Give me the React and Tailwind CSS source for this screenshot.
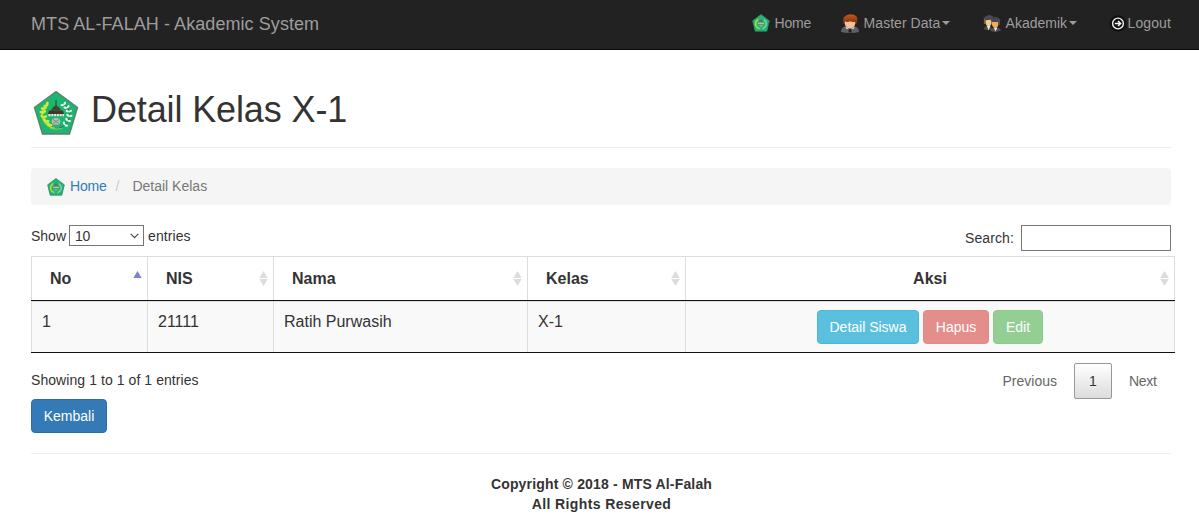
import React from 'react';

function Emblem({ className }) {
  const leaves = [
    [14, 15.5, -45], [11.5, 19, -25], [10, 23, -10], [10.5, 27.5, 8], [12.5, 31.5, 25], [15.5, 35, 40],
  ];
  const petals = [
    [31, 15, -35], [34, 18, -20], [35.8, 22, 0], [36, 26.500, 15], [34.500, 31, 30], [31.500, 35, 45],
  ];
  return (
    <svg viewBox="0 0 46 46" className={className} aria-hidden="true">
      <path d="M23 1.5 44.5 17.5 36.5 44H9.5L1.5 17.500Z" fill="#1db670" stroke="#5f7f6b" strokeWidth="1.4" />
      <path d="M15 14Q7 20 10 29Q13 37 22 38.500" fill="none" stroke="#b8dc35" strokeWidth="1.4" />
      {leaves.map(([x, y, r]) => (
        <g key={y} transform={`rotate(${r} ${x} ${y})`} fill="#cfe83c">
          <ellipse cx={x - 1.6} cy={y} rx="2.2" ry="1.4" transform={`rotate(35 ${x} ${y})`} />
          <ellipse cx={x + 1.8} cy={y} rx="2.2" ry="1.4" transform={`rotate(-35 ${x} ${y})`} />
        </g>
      ))}
      <path d="M31 14Q39 20 36.500 28Q34 36 26 38" fill="none" stroke="#2b7f55" strokeWidth="1" />
      {petals.map(([x, y, r]) => (
        <g key={y} transform={`rotate(${r} ${x} ${y})`} fill="#f3f6f0">
          <ellipse cx={x - 1.8} cy={y} rx="1.8" ry="1.1" transform={`rotate(30 ${x} ${y})`} />
          <ellipse cx={x + 1.8} cy={y} rx="1.8" ry="1.1" transform={`rotate(-30 ${x} ${y})`} />
        </g>
      ))}
      <path d="M23 10V16" stroke="#3c3a2c" strokeWidth="1" />
      <path d="M18 20.500Q19 17.500 23 15Q27 17.500 28 20.500Z" fill="#3b4a35" />
      <path d="M16 20.500H30L31 24H15Z" fill="#4a3429" />
      <path d="M15.500 25.200H31" stroke="#e7e9df" strokeWidth="2.200" strokeDasharray="2 .8" />
      <ellipse cx="23" cy="31.500" rx="4.300" ry="3.500" fill="#b4bfb6" />
      <path d="M20 29.500L26 33.500M26 29.500L20 33.500M20 37L23 34.500L26 37" fill="none" stroke="#7c8b80" strokeWidth="1" />
      <path d="M17 38.500Q23 40 29 38.500" fill="none" stroke="#78c85f" strokeWidth="1" />
    </svg>
  );
}

function SmallEmblem({ className }) {
  return (
    <svg viewBox="0 0 18 18" className={className} aria-hidden="true">
      <path d="M9 .5 17.300 6.800 14.800 17.200H3.200L.7 6.800Z" fill="#22b573" stroke="#2d8c60" strokeWidth=".8" />
      <path d="M6.200 5.300Q2.800 8 3.800 11.500Q4.800 14 7.500 14.600" fill="none" stroke="#a5dc3a" strokeWidth="1.700" />
      <path d="M11.800 5.500Q15 8 14 11.500Q13 14 10.500 14.600" fill="none" stroke="#96d2b2" strokeWidth="1.200" />
      <path d="M6 8.800Q7 6.200 9 5.300Q11 6.200 12 8.800Z" fill="#4c7d61" />
      <path d="M6 9.300H12.200" stroke="#b6b9ae" strokeWidth="1.500" />
      <path d="M7 11H11.200L9 13.600Z" fill="#8fa397" />
    </svg>
  );
}

function UserIcon() {
  return (
    <svg viewBox="0 0 18 19" className="h-[19px] w-[18px]" aria-hidden="true">
      <defs>
        <linearGradient id="hair" x1="0" y1="0" x2="0" y2="1">
          <stop stopColor="#c25a22" /><stop offset="1" stopColor="#7d2b08" />
        </linearGradient>
      </defs>
      <path d="M0 18Q0 13.500 4 12.500H14Q18 13.500 18 18Q15 19 9 19Q3 19 0 18Z" fill="#606062" />
      <path d="M4.500 12.500 9 16 13.500 12.500 13 14.800 9 15.500 5 14.800Z" fill="#b9dcf0" />
      <path d="M7.800 14.500H10.200L10.600 18.500H7.400Z" fill="#1f2329" />
      <path d="M3.600 6H14.400V9.500Q13 14.500 9 14.500Q5 14.500 3.600 9.500Z" fill="#f6bf98" />
      <path d="M2.800 10Q1 4.500 4 2.300Q6.500 .2 9.500 .2Q13.500 .2 15.500 2.600Q17.500 5 15.300 10L14.300 7.800Q11 8.300 9 7.300Q6 8.500 4 7.300Z" fill="url(#hair)" />
    </svg>
  );
}

function GraduatesIcon() {
  return (
    <svg viewBox="0 0 18 18" className="h-[18px] w-[18px]" aria-hidden="true">
      <path d="M.5 15Q2 11.500 5 11.500Q9 12 9 16L3 16Z" fill="#48494c" />
      <path d="M2.500 5H8.500V10Q7 13 5 12.500Q3 12 2.500 9Z" fill="#f3ca8b" />
      <path d="M4 12 5.500 16.500 7.300 12Z" fill="#eee7db" />
      <path d="M.3 3.700 6 .7 11 2.700 8.500 5.800 2.500 6.300Z" fill="#4b4b4e" />
      <path d="M1.400 5V10" stroke="#9b8052" strokeWidth=".8" />
      <path d="M7.500 17Q8 13.500 12 13.500Q17 13.500 18 16.500L12 18Z" fill="#505158" />
      <path d="M9 7H15.300V11Q14 15 12 14.500Q10 14 9 11Z" fill="#eeab62" />
      <path d="M11 14 12.500 17.500 14.200 14Z" fill="#f3ede5" />
      <path d="M7.500 5.500 12.500 2.800 17.500 5 15 8 9 8Z" fill="#48484e" />
      <path d="M16.300 6V11" stroke="#74664d" strokeWidth=".8" />
    </svg>
  );
}

function LogoutIcon() {
  return (
    <svg viewBox="0 0 18 18" className="h-[18px] w-[18px]" aria-hidden="true">
      <circle cx="9" cy="9.500" r="8.300" fill="#101010" />
      <circle cx="9" cy="9.500" r="5.400" fill="none" stroke="#f2f2f2" strokeWidth="1.400" />
      <path d="M5.800 9.500H11.500M9 7 11.600 9.500 9 12" fill="none" stroke="#f2f2f2" strokeWidth="1.600" />
    </svg>
  );
}

function Caret() {
  return <svg viewBox="0 0 8 4" className="ml-[2px] h-1 w-2" aria-hidden="true"><path d="M0 0H8L4 4Z" fill="#9d9d9d" /></svg>;
}

function SortMark({ active }) {
  return (
    <svg viewBox="0 0 9 15" className="mr-[5px] h-[15px] w-[9px] shrink-0" aria-hidden="true">
      <path d="M.3 7 4.500 0 8.700 7Z" fill={active ? '#8080d8' : '#dcdcdc'} />
      {!active && <path d="M.3 8H8.700L4.500 15Z" fill="#dcdcdc" />}
    </svg>
  );
}

const grid = 'grid grid-cols-[116px_126px_254px_158px_490px]';
const headings = ['No', 'NIS', 'Nama', 'Kelas', 'Aksi'];
const values = ['1', '21111', 'Ratih Purwasih', 'X-1'];
const btn = 'h-[34px] rounded-[4px] border text-center text-[14px] leading-[32px] text-white';

export default function App() {
  return (
    <div className="h-[529px] overflow-hidden bg-white font-['Liberation_Sans',Arial,sans-serif] text-[14px] leading-[20px] text-[#333]">
      <nav className="flex h-[50px] items-center justify-between border-b border-[#080808] bg-[#222] pr-7 pl-[31px] text-[#9d9d9d]">
        <a className="pb-px text-[18px] tracking-[0.07px]">MTS AL-FALAH - Akademic System</a>
        <div className="flex items-center pb-[3px]">
          <a className="flex w-[89px] items-center gap-[5px] tracking-[-0.2px]"><SmallEmblem className="h-[18px] w-[18px]" />Home</a>
          <a className="flex w-[142px] items-center"><UserIcon /><span className="ml-[5px] tracking-[0.05px]">Master Data</span><Caret /></a>
          <a className="flex w-[126px] items-center"><GraduatesIcon /><span className="ml-[5px]">Akademik</span><Caret /></a>
          <a className="flex items-center gap-px tracking-[0.1px]"><LogoutIcon />Logout</a>
        </div>
      </nav>

      <main className="pr-7 pl-[31px]">
        <header className="flex h-[98px] items-start border-b border-[#eee] pt-10 pl-[2px]">
          <Emblem className="h-[46px] w-[46px]" />
          <h1 className="ml-3 text-[36px] leading-[40px] font-normal tracking-[-0.12px]">Detail Kelas X-1</h1>
        </header>

        <div className="mt-5 flex h-[37px] items-center rounded-[4px] bg-[#f5f5f5] pl-4">
          <SmallEmblem className="h-[18px] w-[18px]" />
          <a className="ml-[5px] pb-[2px] tracking-[-0.2px] text-[#337ab7]">Home</a>
          <span className="ml-[9px] pb-[2px] text-[#ccc]">/</span>
          <span className="ml-[13px] pb-[2px] text-[#777]">Detail Kelas</span>
        </div>

        <div className="mt-5 flex h-[31px] items-start justify-between">
          <div className="flex items-center">
            <span className="w-[34px]">Show</span>
            <div className="ml-1 flex h-[21px] w-[75px] items-center justify-between border border-[#767676] pr-1 pl-[5px]">
              <span className="tracking-[-0.2px]">10</span>
              <svg viewBox="0 0 9 6" className="h-[6px] w-[9px]"><path d="M.7.8 4.500 4.600 8.300.8" fill="none" stroke="#444" strokeWidth="1.100" /></svg>
            </div>
            <span className="ml-1 tracking-[0.1px]">entries</span>
          </div>
          <label className="flex items-center tracking-[0.1px]">Search:<input className="ml-[7px] h-[26px] w-[150px] border border-[#767676] bg-white outline-none" /></label>
        </div>

        <div className="w-[1144px] border-t border-[#ddd] text-[16px]">
          <div className={`${grid} h-[44px] border-b border-[#111]`}>
            {headings.map((h, i) => (
              <div key={h} className={`flex items-center border-l border-[#ddd] pl-[18px] font-bold ${i === 4 ? 'border-r' : ''}`}>
                <span className={`flex-1 ${i === 4 ? 'pr-[4px] text-center' : ''}`}>{h}</span>
                <SortMark active={i === 0} />
              </div>
            ))}
          </div>
          <div className={`${grid} h-[52px] border-b border-[#111] bg-[#f9f9f9]`}>
            {values.map((v) => (
              <div key={v} className="border-t border-l border-[#ddd] pt-[10px] pl-[10px]">{v}</div>
            ))}
            <div className="flex items-start justify-center gap-1 border-t border-r border-l border-[#ddd] pt-2">
              <button className={`${btn} w-[102px] border-[#46b8da] bg-[#5bc0de]`}>Detail Siswa</button>
              <button className={`${btn} w-[66px] border-[#df8a87] bg-[#e48e8b]`}>Hapus</button>
              <button className={`${btn} w-[50px] border-[#8aca8a] bg-[#93cf93]`}>Edit</button>
            </div>
          </div>
        </div>

        <div className="mt-[10px] flex h-9 items-start justify-between">
          <span className="pt-[7px] tracking-[0.07px]">Showing 1 to 1 of 1 entries</span>
          <div className="flex h-9 items-center pr-[15px] text-[#666]">
            <span>Previous</span>
            <span className="mr-[17px] ml-[17px] flex h-9 w-[38px] items-center justify-center rounded-[2px] border border-[#979797] bg-linear-to-b from-white to-[#dcdcdc] text-[#333]">1</span>
            <span className="w-[27px] tracking-[-0.3px]">Next</span>
          </div>
        </div>
        <button className={`${btn} block w-[76px] border-[#2e6da4] bg-[#337ab7]`}>Kembali</button>
        <footer className="mt-5 border-t border-[#eee] pt-5 pl-[1px] text-center font-bold">
          <p className="tracking-[0.17px]">Copyright © 2018 - MTS Al-Falah</p>
          <p className="tracking-[0.38px]">All Rights Reserved</p>
        </footer>
      </main>
    </div>
  );
}
